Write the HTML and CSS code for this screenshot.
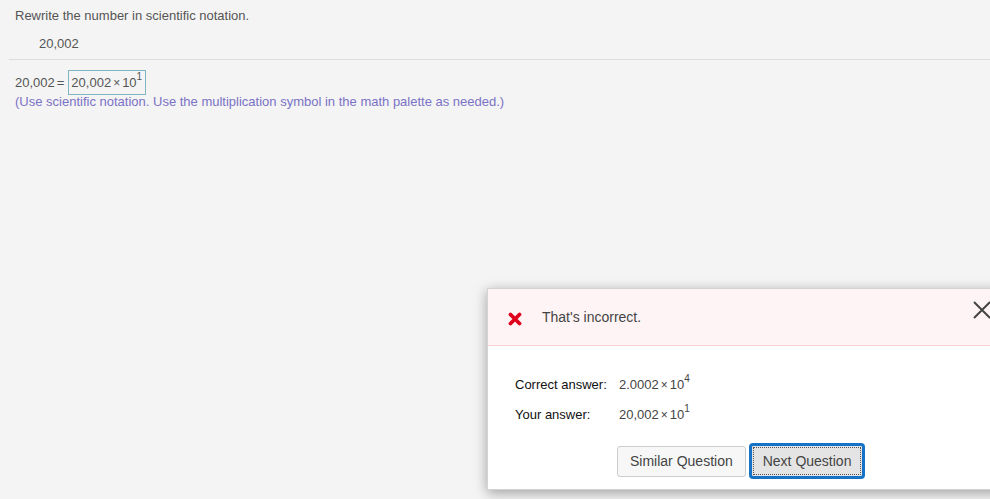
FILE: index.html
```html
<!DOCTYPE html>
<html lang="en">
<head>
  <meta charset="UTF-8" />
  <title>Scientific notation</title>
  <link rel="stylesheet" href="styles.css">
</head>
<body>
  <div class="question">
    <p class="prompt">Rewrite the number in scientific notation.</p>
    <p class="given">20,002</p>
  </div>
  <div class="answer">
    <div class="eq">
      <span>20,002</span><span class="equals">=</span>
      <span class="box">20,002<span class="times">×</span>10<sup>1</sup></span>
    </div>
    <p class="hint">(Use scientific notation. Use the multiplication symbol in the math palette as needed.)</p>
  </div>

  <div class="dialog">
    <div class="dialog-head">
      <svg class="bad" width="14" height="14" viewBox="0 0 14 14">
        <path d="M2.5 2.5 L11.5 11.5 M11.5 2.5 L2.5 11.5" stroke="#e0001b" stroke-width="3.8" stroke-linecap="round"/>
      </svg>
      <span class="title">That's incorrect.</span>
      <svg class="close" width="18" height="18" viewBox="0 0 18 18">
        <path d="M1 1 L17 17 M17 1 L1 17" stroke="#444" stroke-width="2"/>
      </svg>
    </div>
    <div class="dialog-body">
      <div class="row">
        <span class="label">Correct answer:</span>
        <span class="val">2.0002<span class="times">×</span>10<sup>4</sup></span>
      </div>
      <div class="row">
        <span class="label">Your answer:</span>
        <span class="val">20,002<span class="times">×</span>10<sup>1</sup></span>
      </div>
      <div class="actions">
        <button class="btn">Similar Question</button>
        <button class="btn primary">Next Question</button>
      </div>
    </div>
  </div>
</body>
</html>
```

FILE: styles.css
```css
body {
  margin: 0;
  background: #f4f4f4;
  font-family: "Liberation Sans", Arial, sans-serif;
  font-size: 13px;
  color: #555;
  width: 990px;
  height: 499px;
  overflow: hidden;
  position: relative;
}
p {
  margin: 0;
}
.question {
  margin-left: 9px;
  padding: 8px 0 0 6px;
  border-bottom: 1px solid #dcdcdc;
  height: 60px;
  box-sizing: border-box;
}
.prompt {
  line-height: 16px;
}
.given {
  margin: 12px 0 0 24px;
  line-height: 16px;
}
.answer {
  padding: 10px 0 0 15px;
}
.eq {
  display: flex;
  align-items: center;
  height: 24px;
}
.equals {
  margin: 0 2px 0 2px;
}
.box {
  display: inline-block;
  border: 1px solid #7fb6c4;
  padding: 3px 3px 2px 2px;
  line-height: 17px;
  margin-left: 2px;
}
.times {
  margin: 0 2px;
  font-size: 12px;
}
sup {
  font-size: 10px;
  vertical-align: 7px;
  line-height: 0;
}
.hint {
  color: #7a72c6;
  line-height: 16px;
}
.dialog {
  position: absolute;
  left: 487px;
  top: 288px;
  width: 520px;
  height: 200px;
  background: #fff;
  border: 1px solid #d4d4d4;
  box-shadow: 0 3px 12px rgba(0, 0, 0, 0.35);
}
.dialog-head {
  height: 57px;
  background: #fff4f5;
  border-bottom: 1px solid #f7d3d8;
  display: flex;
  align-items: center;
  padding-left: 20px;
  box-sizing: border-box;
  position: relative;
}
.bad {
  margin-top: 3px;
}
.title {
  font-size: 14px;
  color: #444;
  margin-left: 20px;
}
.close {
  position: absolute;
  left: 485px;
  top: 12px;
}
.dialog-body {
  padding: 31px 0 0 27px;
}
.row {
  display: flex;
  align-items: baseline;
  height: 30px;
}
.label {
  width: 104px;
  color: #111;
}
.val {
  color: #444;
}
.actions {
  display: flex;
  gap: 3px;
  margin: 6px 0 0 102px;
  align-items: center;
}
.btn {
  font-family: inherit;
  font-size: 14px;
  color: #444;
  background: #f7f7f7;
  border: 1px solid #ccc;
  border-radius: 3px;
  height: 31px;
  padding: 0 12px;
}
.btn.primary {
  background: #e4e4e4;
  border: 3px solid #1672c6;
  border-radius: 4px;
  outline: 1px dotted #555;
  outline-offset: -5px;
  height: 36px;
  padding: 0 11px;
}
```
